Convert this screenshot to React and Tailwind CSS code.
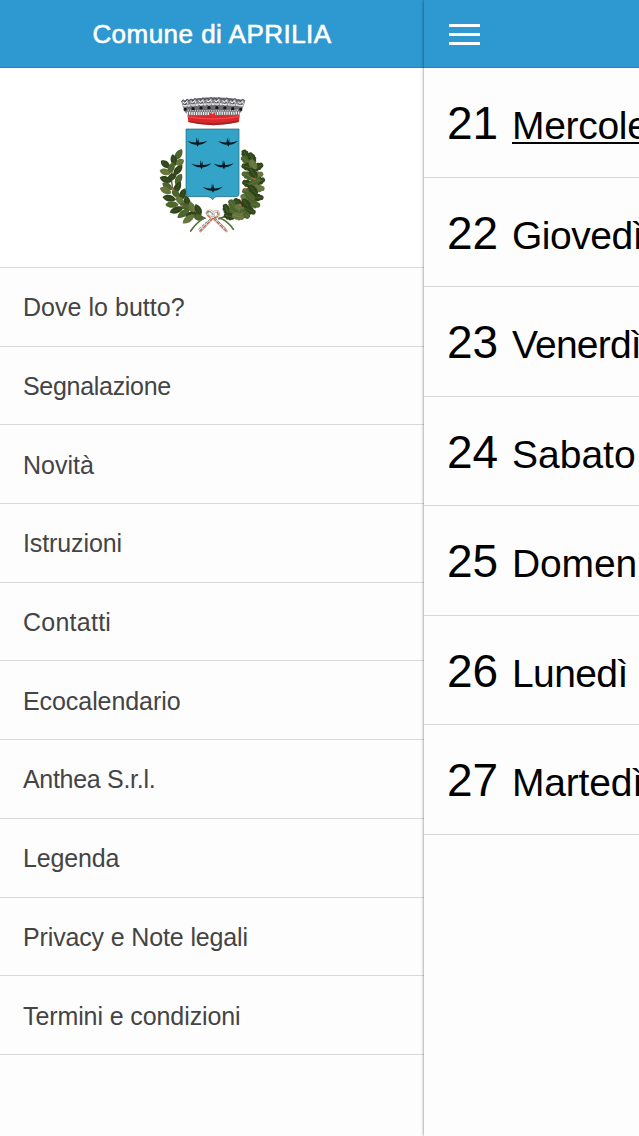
const menu = [
  ['Dove lo butto?', 'tracking-[0.03px]'],
  ['Segnalazione', 'tracking-[-0.3px]'],
  ['Novità', 'tracking-normal'],
  ['Istruzioni', 'tracking-[-0.1px]'],
  ['Contatti', 'tracking-[0.25px]'],
  ['Ecocalendario', 'tracking-[-0.07px]'],
  ['Anthea S.r.l.', 'tracking-[-0.3px]'],
  ['Legenda', 'tracking-[-0.15px]'],
  ['Privacy e Note legali', 'tracking-[-0.14px]'],
  ['Termini e condizioni', 'tracking-[-0.1px]'],
];

const days = [
  ['21', 'Mercoledì', 'tracking-[-0.3px] underline decoration-2 underline-offset-[3px]'],
  ['22', 'Giovedì', 'tracking-[-0.5px]'],
  ['23', 'Venerdì', 'tracking-[-0.8px]'],
  ['24', 'Sabato', 'tracking-normal'],
  ['25', 'Domenica', 'tracking-[-0.15px]'],
  ['26', 'Lunedì', 'tracking-[-0.6px]'],
  ['27', 'Martedì', 'tracking-[-0.2px]'],
];

// Laurel leaves: x, y, rotation, length, shade
const laurel = [
  [86, 209, -58, 19, 1], [72, 225, -105, 18, 0], [90, 232, -35, 14, 2],
  [46, 238, 38, 17, 0], [64, 249, -65, 19, 1], [84, 255, -50, 20, 0],
  [45, 261, 18, 17, 2], [66, 276, -35, 17, 0], [86, 283, -62, 19, 1],
  [47, 284, 20, 19, 0], [52, 304, 35, 18, 1], [82, 308, -62, 21, 0],
  [47, 317, 25, 19, 2], [98, 328, -68, 20, 0], [58, 340, 12, 21, 0],
  [77, 326, 50, 16, 1], [90, 347, 45, 18, 2], [66, 359, 0, 20, 1],
  [112, 350, -105, 20, 0], [80, 375, -20, 22, 0], [106, 365, 30, 19, 1],
  [126, 367, -110, 19, 2], [101, 385, -35, 23, 1], [145, 374, -115, 19, 0],
  [125, 389, -15, 20, 0], [116, 402, -35, 22, 2], [146, 398, 15, 16, 1],
];

// Oak leaves: x, y, rotation, length, shade
const oak = [
  [286, 208, 65, 15, 0], [289, 226, 35, 18, 1], [306, 219, 65, 18, 0],
  [322, 246, -25, 19, 0], [294, 246, 15, 20, 0], [309, 239, 65, 17, 2],
  [294, 272, 25, 20, 1], [321, 272, -20, 20, 2], [309, 264, 55, 18, 0],
  [327, 289, -20, 19, 0], [294, 296, 20, 18, 0], [314, 291, -25, 20, 1],
  [324, 310, 5, 20, 2], [294, 321, 20, 18, 1], [309, 315, 50, 18, 0],
  [319, 337, 5, 22, 0], [286, 342, 50, 18, 2], [300, 335, 45, 18, 1],
  [311, 358, 10, 20, 1], [266, 355, 45, 19, 0], [248, 360, 60, 18, 1],
  [289, 357, 55, 18, 0], [298, 376, 25, 20, 0], [230, 374, 70, 18, 0],
  [270, 373, 45, 19, 2], [253, 382, 30, 18, 1], [284, 387, 40, 18, 1],
  [238, 394, 15, 17, 0], [264, 394, 15, 19, 2],
];

const greens = ['#2f4519', '#4b632c', '#65753d'];

const Leaf = ({ x, y, r, n, c }) => (
  <g transform={`translate(${x} ${y}) rotate(${r})`}>
    <path d={`M${-n} 0C${-n / 2} -14 ${n / 2} -13 ${n} 0C${n / 2} 12 ${-n / 2} 13 ${-n} 0Z`} fill={greens[c]} />
    <path d={`M${-n + 3} 0H${n - 4}`} stroke="#82905a" strokeWidth="1" opacity=".5" />
  </g>
);

const OakLeaf = ({ x, y, r, n, c }) => (
  <g transform={`translate(${x} ${y}) rotate(${r})`}>
    <path
      d={`M${-n} 0Q${-n} -8 ${-n * 0.55} -8Q${-n * 0.3} -14 0 -10Q${n * 0.35} -14 ${n * 0.55} -8Q${n} -9 ${n} 0Q${n} 8 ${n * 0.55} 8Q${n * 0.3} 14 0 10Q${-n * 0.3} 14 ${-n * 0.55} 8Q${-n} 9 ${-n} 0Z`}
      fill={greens[c]}
    />
    <path d={`M${-n + 4} 0H${n - 4}`} stroke="#8b9858" strokeWidth="1.5" opacity=".6" />
  </g>
);

const swallows = [[142, 172], [234, 172], [154, 240], [221, 240], [188, 310]];
const finials = [0, 1, 2, 3, 4, 5, 6, 7];

function Crest() {
  return (
    <svg viewBox="0 0 390 480" className="ml-[150px] h-[160px] w-[130px]" aria-hidden="true">
      <path d="M87 207Q57 242 67 305Q83 360 167 401" fill="none" stroke="#66512e" strokeWidth="4" />
      <path d="M284 211Q319 257 304 315Q285 375 205 402" fill="none" stroke="#66512e" strokeWidth="5" />
      {laurel.map(([x, y, r, n, c], i) => <Leaf key={i} x={x} y={y} r={r} n={n} c={c} />)}
      {oak.map(([x, y, r, n, c], i) => <OakLeaf key={i} x={x} y={y} r={r} n={n} c={c} />)}
      <g fill="#b3654a">
        <circle cx="65" cy="262" r="3" /><circle cx="70" cy="316" r="3" />
        <circle cx="95" cy="363" r="3" /><circle cx="130" cy="378" r="3" />
        <circle cx="313" cy="282" r="4" /><circle cx="286" cy="312" r="4" />
        <circle cx="270" cy="360" r="4" /><circle cx="275" cy="386" r="3" />
      </g>

      <path d="M108 132H267V326Q267 334 259 335H201Q192 335 188 344Q183 335 174 335H117Q108 334 108 326Z" fill="#33a4c7" stroke="#245d6a" strokeWidth="2" />
      {swallows.map(([x, y], i) => (
        <path
          key={i}
          transform={`translate(${x} ${y})`}
          d="M-30 -4Q-16 1 -4 0L-2 -15L1 -2L4 -13L4 0Q16 1 30 -5Q18 7 4 7L1 13L-3 7Q-18 7 -30 -4Z"
          fill="#08191f"
        />
      ))}

      <path d="M111 76Q188 92 270 76L267 111Q190 130 115 111Z" fill="#db282d" />
      <path d="M117 107Q190 121 265 106V111Q190 130 115 111Z" fill="#a52427" />
      <path d="M113 95Q190 109 269 94" fill="none" stroke="#f6474a" strokeWidth="4" />
      <path d="M94 48L104 80L118 94Q188 90 260 92L274 80L286 46Q188 26 94 48Z" fill="#6c6c70" />
      <path d="M110 85Q190 86 271 84" fill="none" stroke="#eeeeee" strokeWidth="9" strokeDasharray="4 3" />
      <path d="M106 76Q190 80 274 75" fill="none" stroke="#bcbcbe" strokeWidth="5" strokeDasharray="4 3" />
      <path d="M102 63Q190 53 279 61" fill="none" stroke="#dcdcdd" strokeWidth="7" strokeDasharray="7 5" />
      {finials.map((i) => (
        <g key={i} transform={`translate(${106 + i * 23.8} ${52 - 5 * Math.sin((i / 7) * Math.PI)})`}>
          <path d="M-9 12L-12 -3L-7 -9L-2 -2L3 -11L10 -7L11 1L7 13Z" fill="#99999d" />
          <path d="M-11 -2Q-6 -13 -1 -1Q6 -16 11 -3M-7 3L-1 8L7 1" fill="none" stroke="#3d3d42" strokeWidth="2.5" />
          <path d="M-7 -1L-3 4L4 -3L7 4M-8 10H7" fill="none" stroke="#f7f7f7" strokeWidth="3" />
          <path d="M-5 25V19Q-1 13 4 19V25Z" fill="#151518" />
        </g>
      ))}
      <path d="M179 81L187 88L197 81L195 96H181Z" fill="#e52c30" />

      <g fill="none" strokeLinecap="round">
        <path d="M208 399Q231 405 250 433M164 399Q142 409 122 438" stroke="#55733a" strokeWidth="5" />
        <path d="M183 398Q162 384 177 378Q188 376 190 394Q190 373 204 381Q211 398 188 399L151 438M190 400L229 438" stroke="#aaa89c" strokeWidth="8" />
        <path d="M183 398Q162 384 177 378Q188 376 190 394Q190 373 204 381Q211 398 188 399L151 438M190 400L229 438" stroke="#f1e9dc" strokeWidth="5" />
        <path d="M180 397Q163 384 177 378M188 400L151 438M190 400L229 438M202 381Q210 396 193 398" stroke="#d55748" strokeWidth="3.5" strokeDasharray="9 6" />
        <path d="M174 380Q188 377 190 394M181 402L145 433M196 401L226 429" stroke="#378570" strokeWidth="2.5" strokeDasharray="7 6" />
      </g>
    </svg>
  );
}

export default function App() {
  return (
    <div className="flex h-[1136px] w-[639px] overflow-hidden bg-[#fdfdfd] font-['Liberation_Sans',Arial,sans-serif]">
      <aside className="w-[424px] shrink-0">
        <header className="flex h-[68px] items-center justify-center border-b border-[#2984b7] bg-[#2e98d0] pt-[2px] text-[26px] tracking-[0.47px] text-white [-webkit-text-stroke:0.6px_white]">
          <h1>Comune di APRILIA</h1>
        </header>
        <div className="h-[199px] bg-white pt-[17px]">
          <Crest />
        </div>
        <nav className="border-t border-[#d9d9d9]">
          {menu.map(([label, tracking]) => (
            <a key={label} className={`flex h-[78.7px] items-center border-b border-[#d9d9d9] pt-[2.5px] pl-[23px] text-[25px] text-[#444] ${tracking}`}>
              {label}
            </a>
          ))}
        </nav>
      </aside>
      <main className="relative z-10 w-[215px] shrink-0 shadow-[0_0_3px_rgba(0,0,0,0.55)]">
        <header className="flex h-[68px] items-center border-b border-[#2984b7] bg-[#2e98d0] pt-px pl-[25px]">
          <button aria-label="Menu" className="flex w-[31px] flex-col gap-[6px]">
            <span className="h-[3px] bg-white" />
            <span className="h-[3px] bg-white" />
            <span className="h-[3px] bg-white" />
          </button>
        </header>
        <ul className="h-[1068px] overflow-hidden bg-[#fdfdfd] text-black">
          {days.map(([number, name, style]) => (
            <li key={number} className="flex h-[109.57px] items-baseline border-b border-[#d6d6db] pl-[23px] leading-[110px] whitespace-nowrap">
              <span className="w-[65px] shrink-0 text-[46px]">{number}</span>
              <span className={`text-[39px] ${style}`}>{name}</span>
            </li>
          ))}
        </ul>
      </main>
    </div>
  );
}
